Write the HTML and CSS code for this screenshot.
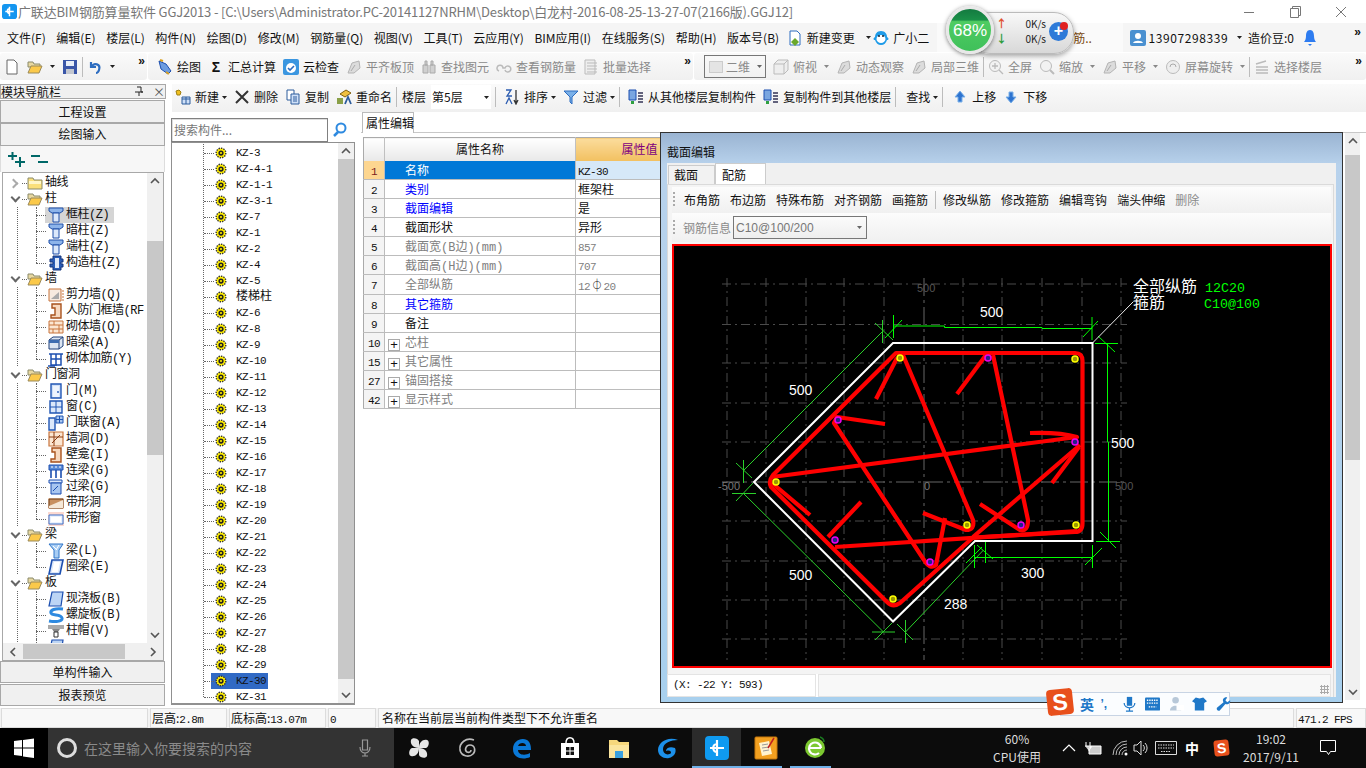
FILE: index.html
```html
<!DOCTYPE html>
<html lang="zh-CN">
<head>
<meta charset="utf-8">
<title>广联达BIM钢筋算量软件 GGJ2013</title>
<link rel="stylesheet" href="styles.css">
</head>
<body>
<svg class="defs" aria-hidden="true">
  <symbol id="reb" viewBox="0 0 16 16"><circle cx="8" cy="8" r="5.5" fill="#fe0" stroke="#333" stroke-width="1.6" stroke-dasharray="1.6 1.2"/><circle cx="8" cy="8" r="3" fill="#222"/><circle cx="8" cy="8" r="1.2" fill="#fe0"/></symbol>
  <symbol id="fold" viewBox="0 0 16 16"><path d="M1 3h5l1 2h8v9H1z" fill="#fbe07a" stroke="#8a8a6a"/><path d="M2 6h12v3H2z" fill="#fff6c8"/></symbol>
  <symbol id="open" viewBox="0 0 16 16"><path d="M1 3h5l1 2h6v3H1z" fill="#e8d8a0" stroke="#8a8a6a"/><path d="M4 7h11l-3 7H1z" fill="#fbc94a" stroke="#9a8a5a"/></symbol>
  <symbol id="col" viewBox="0 0 16 16"><path d="M1 1h14v3l-3 2H4L1 4z" fill="#8db4ea" stroke="#1f4fa8"/><path d="M5 6h6v9H5z" fill="#dbe8fb" stroke="#1f4fa8"/></symbol>
  <symbol id="gz" viewBox="0 0 16 16"><path d="M5 1h8v3h2v3h-2v2h2v3h-2v3H5v-3H2V9h3V7H2V4h3z" fill="#2a5cb5" stroke="#14347c"/><path d="M7 3h4v10H7z" fill="#dfe9fa"/></symbol>
  <symbol id="shear" viewBox="0 0 16 16"><path d="M1 2h12v12H1z" fill="#f7eadf" stroke="#c8743c"/><path d="M3 12l8-7v7z" fill="#aaa"/><path d="M14 4h2M14 7h2M14 10h2M14 13h2" stroke="#c8743c"/></symbol>
  <symbol id="rf" viewBox="0 0 16 16"><path d="M4 1h9v14H3v-3h4V5H4z" fill="#f7d9c0" stroke="#a8521c" stroke-width="1.4"/></symbol>
  <symbol id="brick" viewBox="0 0 16 16"><path d="M1 2h14v12H1z" fill="#fbe6d2" stroke="#c8743c"/><path d="M1 6h14M1 10h14M6 2v4M11 6v4M5 10v4M11 10v4" stroke="#c8743c"/></symbol>
  <symbol id="anl" viewBox="0 0 16 16"><path d="M1 5l4-3h10v9l-4 3H1z" fill="#dbe5f2" stroke="#1f3f78"/><path d="M1 5h10v9M11 5l4-3" fill="none" stroke="#1f3f78"/><path d="M1 5h10v3H1z" fill="#3d6cb0"/></symbol>
  <symbol id="jj" viewBox="0 0 16 16"><path d="M1 3h14M3 3v11h10V3M3 8h10M8 3v12M0 15h7" fill="none" stroke="#1c4fb0" stroke-width="1.5"/></symbol>
  <symbol id="door" viewBox="0 0 16 16"><path d="M3 1h10v14H3z" fill="#cfe0f8" stroke="#2056b4" stroke-width="1.4"/><path d="M5 3h6v11H5z" fill="#eef4fd"/><circle cx="10" cy="9" r=".9" fill="#2056b4"/></symbol>
  <symbol id="win" viewBox="0 0 16 16"><path d="M2 2h12v12H2z" fill="#dbe8fb" stroke="#2056b4" stroke-width="1.4"/><path d="M2 8h12M8 2v12" stroke="#2056b4"/></symbol>
  <symbol id="dw" viewBox="0 0 16 16"><path d="M1 3h6v12H1z" fill="#dbe8fb" stroke="#2056b4" stroke-width="1.4"/><path d="M8 1h7v7H8z" fill="#a8c6f0" stroke="#2056b4"/><path d="M11.500 1v7M8 4.500h7" stroke="#2056b4"/></symbol>
  <symbol id="hole" viewBox="0 0 16 16"><path d="M1 1h14v14H1z" fill="#fbe6d2" stroke="#c8743c" stroke-width="1.2"/><path d="M4 12L12 4M1 6h14M6 1v14" stroke="#8a3a10"/></symbol>
  <symbol id="lian" viewBox="0 0 16 16"><path d="M1 2h14v5H1z" fill="#5b8cd8" stroke="#1c4fb0"/><path d="M3 7v8M13 7v8M8 7v8" stroke="#1c4fb0" stroke-width="1.6"/><path d="M3 4h2M7 4h2M11 4h2" stroke="#fff"/></symbol>
  <symbol id="guo" viewBox="0 0 16 16"><path d="M1 1h13v3H1z" fill="#dbe8fb" stroke="#1c4fb0"/><path d="M3 4h10v11H3z" fill="#a8c6f0" stroke="#1c4fb0"/><path d="M5 12l5-5" stroke="#1c4fb0"/></symbol>
  <symbol id="sh" viewBox="0 0 16 16"><path d="M0 3h16v11H0z" fill="#f8d8c0"/><path d="M1 4h14v9H1z" fill="#c89060" stroke="#6a3a14"/><path d="M1 11l14-6v8H1z" fill="#f5e8d8"/></symbol>
  <symbol id="sw" viewBox="0 0 16 16"><path d="M0 1h16v14H0z" fill="#fbd8d0"/><path d="M1 4h14v9H1z" fill="#eaf1fd" stroke="#3c70c8"/><path d="M3 6h10v5H3z" fill="#fff"/></symbol>
  <symbol id="beam" viewBox="0 0 16 16"><path d="M1 1h14L11 7v8H6V7z" fill="#a8cdf4" stroke="#2e74c8"/><path d="M5 3l4 4M11 2L8 7" stroke="#fff"/></symbol>
  <symbol id="ring" viewBox="0 0 16 16"><path d="M4 1h11l-3 14H1z" fill="#dbe8fb" stroke="#1c4fb0" stroke-width="1.6"/><path d="M6 3h6l-2 10H4z" fill="#fff"/></symbol>
  <symbol id="slab" viewBox="0 0 16 16"><path d="M4 1h11l-2 14H1z" fill="#bcd5f5" stroke="#1c4fb0" stroke-width="1.2"/></symbol>
  <symbol id="spi" viewBox="0 0 16 16"><path d="M15 2C7 1 2 3 3 6s10 1 11 5-8 4-13 3" fill="none" stroke="#2e8ae0" stroke-width="3"/></symbol>
  <symbol id="cap" viewBox="0 0 16 16"><path d="M0 2h16v4H0z" fill="#aaa"/><path d="M4 6h8l-2 3H6z" fill="#888"/><path d="M6 9h4v5H6z" fill="#fff" stroke="#333"/></symbol>
  <symbol id="care" viewBox="0 0 5 3"><path d="M0 0h5L2.500 3z"/></symbol>
  <symbol id="grey" viewBox="0 0 16 16"><path d="M2 14L6 4l7-2 1 7-6 5z" fill="#dcdcdc" stroke="#b4b4b4"/><path d="M5 12l4-6" stroke="#aaa"/></symbol>
  <symbol id="copy" viewBox="0 0 16 16"><path d="M2 1h7v10H2z" fill="#fff" stroke="#2c5c9c"/><path d="M6 5h8v10H6z" fill="#cfe0f8" stroke="#2c5c9c"/><path d="M8 8h4M8 10h4M8 12h4" stroke="#2c5c9c"/></symbol>
  <symbol id="cf" viewBox="0 0 16 16"><path d="M1 1h7v10H1z" fill="#7aa6e0" stroke="#1c4fb0"/><path d="M3 12h3v3H3z" fill="#2ea040"/><path d="M10 4h5M10 7h5M10 10h5M10 13h5" stroke="#335" stroke-width="1.4"/></symbol>
</svg>

<div class="app">
  <header class="titlebar">
    <svg class="appicon" viewBox="0 0 16 16"><rect width="16" height="16" rx="3" fill="#1496f0"/><path d="M8 3v10M3.500 8h9M8 5c-3 0-3 5 0 5" fill="none" stroke="#fff" stroke-width="1.6"/></svg>
    <span class="title">广联达BIM钢筋算量软件 GGJ2013 - [C:\Users\Administrator.PC-20141127NRHM\Desktop\白龙村-2016-08-25-13-27-07(2166版).GGJ12]</span>
    <div class="winctl">
      <svg viewBox="0 0 46 23"><path d="M18 12.500h10" stroke="#777"/></svg>
      <svg viewBox="0 0 46 23"><path d="M18.500 8.500h8v9h-8zM20.500 8.500v-2h8v9h-2" fill="none" stroke="#777"/></svg>
      <svg viewBox="0 0 46 23"><path d="M18 7l10 10M28 7L18 17" stroke="#777"/></svg>
    </div>
  </header>

  <nav class="menubar">
    <span>文件(F)</span><span>编辑(E)</span><span>楼层(L)</span><span>构件(N)</span><span>绘图(D)</span><span>修改(M)</span><span>钢筋量(Q)</span><span>视图(V)</span><span>工具(T)</span><span>云应用(Y)</span><span>BIM应用(I)</span><span>在线服务(S)</span><span>帮助(H)</span><span>版本号(B)</span>
    <span class="menuicon bian"><svg class="ic" viewBox="0 0 16 16"><path d="M3 1h7l3 3v11H3z" fill="#fff" stroke="#2c6cc0"/><path d="M8 8l4 4-4 4-4-4z" fill="#6aa82c"/></svg>新建变更<svg class="caret" viewBox="0 0 5 3"><use href="#care"/></svg></span>
    <span class="menuicon xiao"><svg class="ic" viewBox="0 0 16 16"><path d="M8 1c4 0 6 3 6 6 2 1 2 3 0 3-1 3-3 5-6 5s-5-2-6-5c-2 0-2-2 0-3 0-3 2-6 6-6z" fill="#1e9be8"/><ellipse cx="8" cy="9" rx="4.500" ry="4" fill="#fff"/><circle cx="6" cy="6" r="1" fill="#123"/><circle cx="10" cy="6" r="1" fill="#123"/></svg>广小二</span>
    <span class="hidden-tail">筋..</span>
    <span class="menuicon user"><svg class="ic" viewBox="0 0 16 16"><rect width="16" height="16" rx="2" fill="#4a90d0"/><circle cx="8" cy="6" r="3" fill="#fff"/><path d="M3 13c1-3 9-3 10 0z" fill="#fff"/></svg><span class="phone">13907298339</span><svg class="caret" viewBox="0 0 5 3"><use href="#care"/></svg></span>
    <span class="dou">造价豆:0</span>
    <svg class="bell" viewBox="0 0 14 18"><path d="M7 1c3 0 4 3 4 6s1 5 2 6H1c1-1 2-3 2-6s1-6 4-6z" fill="#2e7cf0"/><path d="M5 15h4l-2 2z" fill="#2e7cf0"/></svg>
    <span class="more">»</span>
  </nav>

  <div class="toolbar">
    <div class="tgroup g1">
      <svg class="ic" viewBox="0 0 16 16"><path d="M3 1h7l3 3v11H3z" fill="#fff" stroke="#666"/></svg>
      <svg class="ic" viewBox="0 0 16 16"><use href="#open"/></svg>
      <svg class="caret" viewBox="0 0 5 3"><use href="#care"/></svg>
      <svg class="ic" viewBox="0 0 16 16"><path d="M1 1h14v14H1z" fill="#3a56a8"/><path d="M4 2h8v5H4z" fill="#e8eef8"/><path d="M4 10h8v5H4z" fill="#c4c8d0"/></svg>
      <i class="sep"></i>
      <svg class="ic" viewBox="0 0 16 16"><path d="M4 3v5h5M4.500 8C7 3 14 5 12 11c-.5 1.500-2 3-3 3" fill="none" stroke="#2c6cc0" stroke-width="2.200"/></svg>
      <svg class="caret" viewBox="0 0 5 3"><use href="#care"/></svg>
      <span class="more">»</span>
    </div>
    <div class="tgroup g2">
      <span class="tool"><svg class="ic" viewBox="0 0 16 16"><path d="M2 2l7 3 5 7-3 3-7-5z" fill="#6c9ce0" stroke="#1c4fb0"/><path d="M3 1l3 1M9 13l3 2" stroke="#d8a020" stroke-width="2"/></svg>绘图</span>
      <span class="tool"><span class="sigma">Σ</span>汇总计算</span>
      <span class="tool"><svg class="ic" viewBox="0 0 16 16"><rect width="16" height="16" rx="2" fill="#3a96e0"/><circle cx="8" cy="9" r="5" fill="#fff"/><path d="M5 9l2 2 4-4" fill="none" stroke="#2c6cc0" stroke-width="1.600"/></svg>云检查</span>
      <span class="tool off"><svg class="ic"><use href="#grey"/></svg>平齐板顶</span>
      <span class="tool off"><svg class="ic" viewBox="0 0 16 16"><path d="M2 6h5v8H2zM9 6h5v8H9zM4 2h2v4H4zM10 2h2v4h-2z" fill="#d0d0d0" stroke="#aaa"/></svg>查找图元</span>
      <span class="tool off"><svg class="ic" viewBox="0 0 16 16"><path d="M3 12a3 3 0 1 1 4-3l2 0a3 3 0 1 1 0 2" fill="none" stroke="#bbb" stroke-width="1.500"/></svg>查看钢筋量</span>
      <span class="tool off"><svg class="ic" viewBox="0 0 16 16"><path d="M2 1h10v14H2z" fill="#eee" stroke="#bbb"/><path d="M4 4h10M4 7h10M4 10h10M4 13h10" stroke="#bbb"/></svg>批量选择</span>
      <span class="more">»</span>
    </div>
    <div class="tgroup g3">
      <span class="combo2d"><i class="sq"></i>二维<svg class="caret" viewBox="0 0 5 3"><use href="#care"/></svg></span>
      <span class="tool off"><svg class="ic" viewBox="0 0 16 16"><path d="M1 5l4-4h10v10l-4 4H1zM1 5h10v10M11 5l4-4" fill="#eee" stroke="#bbb"/></svg>俯视</span>
      <svg class="caret off" viewBox="0 0 5 3"><use href="#care"/></svg>
      <span class="tool off"><svg class="ic"><use href="#grey"/></svg>动态观察</span>
      <span class="tool off"><svg class="ic"><use href="#grey"/></svg>局部三维</span>
      <i class="sep"></i>
      <span class="tool off"><svg class="ic" viewBox="0 0 16 16"><circle cx="7" cy="7" r="5.500" fill="#f2f2f2" stroke="#bbb"/><path d="M11 11l4 4M7 4v6M4 7h6" stroke="#bbb" stroke-width="1.300"/></svg>全屏</span>
      <span class="tool off"><svg class="ic" viewBox="0 0 16 16"><circle cx="7" cy="7" r="5.500" fill="#f2f2f2" stroke="#bbb"/><path d="M11 11l4 4" stroke="#bbb" stroke-width="2"/></svg>缩放</span>
      <svg class="caret off" viewBox="0 0 5 3"><use href="#care"/></svg>
      <span class="tool off"><svg class="ic"><use href="#grey"/></svg>平移</span>
      <svg class="caret off" viewBox="0 0 5 3"><use href="#care"/></svg>
      <span class="tool off"><svg class="ic" viewBox="0 0 16 16"><circle cx="8" cy="8" r="6.500" fill="#eee" stroke="#bbb"/><path d="M5 8a3 3 0 0 1 6 0" fill="none" stroke="#aaa"/></svg>屏幕旋转</span>
      <svg class="caret off" viewBox="0 0 5 3"><use href="#care"/></svg>
      <i class="sep"></i>
      <span class="tool off"><svg class="ic" viewBox="0 0 16 16"><path d="M2 5l10-3M2 8h12M2 11h12M2 14h12" stroke="#bbb" stroke-width="1.500"/></svg>选择楼层</span>
      <span class="more">»</span>
    </div>
  </div>

  <main class="workspace">
    <aside class="nav">
      <div class="navtitle"><span>模块导航栏</span><svg class="pin" viewBox="0 0 10 10"><path d="M3 1h4v5h2M1 6h8M5 6v4" fill="none" stroke="#222"/></svg><span class="navx">×</span></div>
      <div class="navbtn">工程设置</div>
      <div class="navbtn second">绘图输入</div>
      <div class="expand">
        <svg viewBox="0 0 17 16"><path d="M0 5h9M4.500 1v8M7 11h10M12 6v10" stroke="#006868" stroke-width="2"/></svg>
        <svg viewBox="0 0 17 16"><path d="M0 5h9M7 11h10" stroke="#006868" stroke-width="2"/></svg>
      </div>
      <div class="treebox">
        <div class="tree">
          <div class="r p"><b class="chev closed"></b><svg class="ico"><use href="#fold"/></svg>轴线</div>
          <div class="r p"><b class="chev"></b><svg class="ico"><use href="#open"/></svg>柱</div>
          <div class="r c cs"><svg class="ico"><use href="#col"/></svg><span class="lb">框柱(Z)</span></div>
          <div class="r c"><svg class="ico"><use href="#col"/></svg><span class="lb">暗柱(Z)</span></div>
          <div class="r c"><svg class="ico"><use href="#col"/></svg><span class="lb">端柱(Z)</span></div>
          <div class="r c last"><svg class="ico"><use href="#gz"/></svg><span class="lb">构造柱(Z)</span></div>
          <div class="r p"><b class="chev"></b><svg class="ico"><use href="#open"/></svg>墙</div>
          <div class="r c"><svg class="ico"><use href="#shear"/></svg><span class="lb">剪力墙(Q)</span></div>
          <div class="r c"><svg class="ico"><use href="#rf"/></svg><span class="lb">人防门框墙(RF</span></div>
          <div class="r c"><svg class="ico"><use href="#brick"/></svg><span class="lb">砌体墙(Q)</span></div>
          <div class="r c"><svg class="ico"><use href="#anl"/></svg><span class="lb">暗梁(A)</span></div>
          <div class="r c last"><svg class="ico"><use href="#jj"/></svg><span class="lb">砌体加筋(Y)</span></div>
          <div class="r p"><b class="chev"></b><svg class="ico"><use href="#open"/></svg>门窗洞</div>
          <div class="r c"><svg class="ico"><use href="#door"/></svg><span class="lb">门(M)</span></div>
          <div class="r c"><svg class="ico"><use href="#win"/></svg><span class="lb">窗(C)</span></div>
          <div class="r c"><svg class="ico"><use href="#dw"/></svg><span class="lb">门联窗(A)</span></div>
          <div class="r c"><svg class="ico"><use href="#hole"/></svg><span class="lb">墙洞(D)</span></div>
          <div class="r c"><svg class="ico"><use href="#rf"/></svg><span class="lb">壁龛(I)</span></div>
          <div class="r c"><svg class="ico"><use href="#lian"/></svg><span class="lb">连梁(G)</span></div>
          <div class="r c"><svg class="ico"><use href="#guo"/></svg><span class="lb">过梁(G)</span></div>
          <div class="r c"><svg class="ico"><use href="#sh"/></svg><span class="lb">带形洞</span></div>
          <div class="r c last"><svg class="ico"><use href="#sw"/></svg><span class="lb">带形窗</span></div>
          <div class="r p"><b class="chev"></b><svg class="ico"><use href="#open"/></svg>梁</div>
          <div class="r c"><svg class="ico"><use href="#beam"/></svg><span class="lb">梁(L)</span></div>
          <div class="r c last"><svg class="ico"><use href="#ring"/></svg><span class="lb">圈梁(E)</span></div>
          <div class="r p"><b class="chev"></b><svg class="ico"><use href="#open"/></svg>板</div>
          <div class="r c"><svg class="ico"><use href="#slab"/></svg><span class="lb">现浇板(B)</span></div>
          <div class="r c"><svg class="ico"><use href="#spi"/></svg><span class="lb">螺旋板(B)</span></div>
          <div class="r c"><svg class="ico"><use href="#cap"/></svg><span class="lb">柱帽(V)</span></div>
          <div class="r c"><svg class="ico"><use href="#slab"/></svg></div>
        </div>
        <div class="vs vs-nav"><svg viewBox="0 0 16 16"><path d="M4 10l4-4 4 4" fill="none" stroke="#555" stroke-width="1.600"/></svg><i class="trk"><i class="thumb"></i></i><svg viewBox="0 0 16 16"><path d="M4 6l4 4 4-4" fill="none" stroke="#555" stroke-width="1.600"/></svg></div>
        <div class="hs"><svg viewBox="0 0 16 16"><path d="M10 4L6 8l4 4" fill="none" stroke="#555" stroke-width="1.600"/></svg><i class="hthumb"></i><svg viewBox="0 0 16 16"><path d="M6 4l4 4-4 4" fill="none" stroke="#555" stroke-width="1.600"/></svg></div>
      </div>
      <div class="navbtn low">单构件输入</div>
      <div class="navbtn low b2">报表预览</div>
    </aside>

    <section class="content">
      <div class="toolbar2">
        <span class="tool"><svg class="ic" viewBox="0 0 16 16"><path d="M1 2l3-1 2 2-1 3H2z" fill="#f0c020" stroke="#a08010"/><path d="M7 8h8v7H7z" fill="#cfe0f8" stroke="#2c5c9c"/><path d="M7 10h8M11 8v7" stroke="#2c5c9c"/></svg>新建</span><svg class="caret tight" viewBox="0 0 5 3"><use href="#care"/></svg>
        <span class="tool"><svg class="ic" viewBox="0 0 16 16"><path d="M2 2l12 12M14 2L2 14" stroke="#333" stroke-width="2"/></svg>删除</span>
        <span class="tool"><svg class="ic"><use href="#copy"/></svg>复制</span>
        <span class="tool"><svg class="ic" viewBox="0 0 16 16"><path d="M4 5l6-4 5 3-6 4z" fill="#f0c040" stroke="#806010"/><path d="M1 15V9h6v6z" fill="#8aa048"/><path d="M9 15l3-7 3 7" fill="none" stroke="#2c5c9c" stroke-width="1.800"/></svg>重命名</span>
        <i class="sep"></i>
        <span class="floor">楼层</span>
        <span class="floorbox">第5层<svg class="caret" viewBox="0 0 5 3"><use href="#care"/></svg></span>
        <i class="sep wide"></i>
        <span class="tool"><svg class="ic" viewBox="0 0 16 16"><path d="M2 1h5L3 7h5M2 15l3-6 3 6" fill="none" stroke="#2c5cb0" stroke-width="1.300"/><path d="M12 1v13M10 11l2 4 2-4" fill="none" stroke="#333" stroke-width="1.300"/></svg>排序</span><svg class="caret tight" viewBox="0 0 5 3"><use href="#care"/></svg>
        <span class="tool"><svg class="ic" viewBox="0 0 16 16"><path d="M1 2h14L9 8v7l-2-2V8z" fill="#7ab0e8" stroke="#2c6cc0"/></svg>过滤</span><svg class="caret tight" viewBox="0 0 5 3"><use href="#care"/></svg>
        <i class="sep wide"></i>
        <span class="tool"><svg class="ic"><use href="#cf"/></svg>从其他楼层复制构件</span>
        <span class="tool"><svg class="ic"><use href="#cf"/></svg>复制构件到其他楼层</span>
        <i class="sep"></i>
        <span class="tool find">查找</span><svg class="caret tight" viewBox="0 0 5 3"><use href="#care"/></svg>
        <i class="sep wider"></i>
        <span class="tool"><svg class="ic" viewBox="0 0 16 16"><path d="M8 2l5 6H10v5H6V8H3z" fill="#2e74d0" stroke="#7ab0e8"/></svg>上移</span>
        <span class="tool"><svg class="ic" viewBox="0 0 16 16"><path d="M8 14l5-6H10V3H6v5H3z" fill="#2e74d0" stroke="#7ab0e8"/></svg>下移</span>
      </div>
      <div class="panes">
        <div class="listcol">
          <div class="searchrow">
            <div class="search">搜索构件...</div>
            <svg class="mag" viewBox="0 0 16 16"><circle cx="9" cy="6" r="4.500" fill="none" stroke="#2e8ae0" stroke-width="2"/><path d="M6 10l-4 4" stroke="#2e8ae0" stroke-width="2.500"/></svg>
          </div>
          <div class="listbox">
            <div class="list">
              <div class="k"><svg class="ico"><use href="#reb"/></svg><span>KZ-3</span></div>
              <div class="k"><svg class="ico"><use href="#reb"/></svg><span>KZ-4-1</span></div>
              <div class="k"><svg class="ico"><use href="#reb"/></svg><span>KZ-1-1</span></div>
              <div class="k"><svg class="ico"><use href="#reb"/></svg><span>KZ-3-1</span></div>
              <div class="k"><svg class="ico"><use href="#reb"/></svg><span>KZ-7</span></div>
              <div class="k"><svg class="ico"><use href="#reb"/></svg><span>KZ-1</span></div>
              <div class="k"><svg class="ico"><use href="#reb"/></svg><span>KZ-2</span></div>
              <div class="k"><svg class="ico"><use href="#reb"/></svg><span>KZ-4</span></div>
              <div class="k"><svg class="ico"><use href="#reb"/></svg><span>KZ-5</span></div>
              <div class="k"><svg class="ico"><use href="#reb"/></svg><span>楼梯柱</span></div>
              <div class="k"><svg class="ico"><use href="#reb"/></svg><span>KZ-6</span></div>
              <div class="k"><svg class="ico"><use href="#reb"/></svg><span>KZ-8</span></div>
              <div class="k"><svg class="ico"><use href="#reb"/></svg><span>KZ-9</span></div>
              <div class="k"><svg class="ico"><use href="#reb"/></svg><span>KZ-10</span></div>
              <div class="k"><svg class="ico"><use href="#reb"/></svg><span>KZ-11</span></div>
              <div class="k"><svg class="ico"><use href="#reb"/></svg><span>KZ-12</span></div>
              <div class="k"><svg class="ico"><use href="#reb"/></svg><span>KZ-13</span></div>
              <div class="k"><svg class="ico"><use href="#reb"/></svg><span>KZ-14</span></div>
              <div class="k"><svg class="ico"><use href="#reb"/></svg><span>KZ-15</span></div>
              <div class="k"><svg class="ico"><use href="#reb"/></svg><span>KZ-16</span></div>
              <div class="k"><svg class="ico"><use href="#reb"/></svg><span>KZ-17</span></div>
              <div class="k"><svg class="ico"><use href="#reb"/></svg><span>KZ-18</span></div>
              <div class="k"><svg class="ico"><use href="#reb"/></svg><span>KZ-19</span></div>
              <div class="k"><svg class="ico"><use href="#reb"/></svg><span>KZ-20</span></div>
              <div class="k"><svg class="ico"><use href="#reb"/></svg><span>KZ-21</span></div>
              <div class="k"><svg class="ico"><use href="#reb"/></svg><span>KZ-22</span></div>
              <div class="k"><svg class="ico"><use href="#reb"/></svg><span>KZ-23</span></div>
              <div class="k"><svg class="ico"><use href="#reb"/></svg><span>KZ-24</span></div>
              <div class="k"><svg class="ico"><use href="#reb"/></svg><span>KZ-25</span></div>
              <div class="k"><svg class="ico"><use href="#reb"/></svg><span>KZ-26</span></div>
              <div class="k"><svg class="ico"><use href="#reb"/></svg><span>KZ-27</span></div>
              <div class="k"><svg class="ico"><use href="#reb"/></svg><span>KZ-28</span></div>
              <div class="k"><svg class="ico"><use href="#reb"/></svg><span>KZ-29</span></div>
              <div class="k on"><svg class="ico"><use href="#reb"/></svg><span>KZ-30</span></div>
              <div class="k"><svg class="ico"><use href="#reb"/></svg><span>KZ-31</span></div>
            </div>
            <div class="vs vs-list"><svg viewBox="0 0 16 16"><path d="M4 10l4-4 4 4" fill="none" stroke="#555" stroke-width="1.600"/></svg><i class="trk"><i class="thumb"></i></i><svg viewBox="0 0 16 16"><path d="M4 6l4 4 4-4" fill="none" stroke="#555" stroke-width="1.600"/></svg></div>
          </div>
        </div>
        <div class="propcol">
          <div class="tabs"><span class="tab">属性编辑</span></div>
          <div class="propbody">
            <table class="props">
              <colgroup><col class="c1"><col class="c2"><col class="c3"></colgroup>
              <thead><tr><th></th><th>属性名称</th><th class="val">属性值</th></tr></thead>
              <tbody>
                <tr class="cur"><td>1</td><td>名称</td><td><i class="m">KZ-30</i></td></tr>
                <tr><td>2</td><td class="blue">类别</td><td>框架柱</td></tr>
                <tr><td>3</td><td class="blue">截面编辑</td><td>是</td></tr>
                <tr><td>4</td><td>截面形状</td><td>异形</td></tr>
                <tr class="dim"><td>5</td><td>截面宽(B边)(mm)</td><td><i class="m">857</i></td></tr>
                <tr class="dim"><td>6</td><td>截面高(H边)(mm)</td><td><i class="m">707</i></td></tr>
                <tr class="dim"><td>7</td><td>全部纵筋</td><td><i class="m">12<b class="rb">⏀</b>20</i></td></tr>
                <tr><td>8</td><td class="blue">其它箍筋</td><td></td></tr>
                <tr><td>9</td><td>备注</td><td></td></tr>
                <tr class="dim grp"><td>10</td><td><b class="plus">+</b>芯柱</td><td></td></tr>
                <tr class="dim grp"><td>15</td><td><b class="plus">+</b>其它属性</td><td></td></tr>
                <tr class="dim grp"><td>27</td><td><b class="plus">+</b>锚固搭接</td><td></td></tr>
                <tr class="dim grp"><td>42</td><td><b class="plus">+</b>显示样式</td><td></td></tr>
              </tbody>
            </table>
            <div class="vs vs-prop"><svg viewBox="0 0 16 16"><path d="M4 10l4-4 4 4" fill="none" stroke="#555" stroke-width="1.600"/></svg><i class="trk"><i class="thumb"></i></i><svg viewBox="0 0 16 16"><path d="M4 6l4 4 4-4" fill="none" stroke="#555" stroke-width="1.600"/></svg></div>
          </div>
        </div>
      </div>
    </section>
  </main>

  <footer class="status">
    <span class="s0"></span><span class="s1">层高:<i class="m">2.8m</i></span><span class="s2">底标高:<i class="m">13.07m</i></span><span class="s3"><i class="m">0</i></span><span class="s4">名称在当前层当前构件类型下不允许重名</span><span class="s5"><i class="m">471.2 FPS</i></span>
  </footer>

  <div class="taskbar">
    <div class="start"><svg viewBox="0 0 20 20"><path d="M0 3l8-1v7.500H0zM9 2l11-1.500v9H9zM0 10.500h8V18l-8-1zM9 10.500h11V20L9 18.500z" fill="#fff"/></svg></div>
    <div class="tsearch"><i class="cortana"></i><span>在这里输入你要搜索的内容</span><svg class="mic" viewBox="0 0 12 18"><path d="M3.500 1h5v10h-5zM1 8c0 8 10 8 10 0M6 14v3M3 17h6" fill="none" stroke="#999" stroke-width="1.200"/></svg></div>
    <div class="apps">
      <span class="app-i"><svg viewBox="0 0 24 24"><path d="M12 12C6 12 3 8 4 4c1-3 7-2 8 1zM12 12c0-6 4-9 8-8 3 1 2 7-1 8zM12 12c6 0 9 4 8 8-1 3-7 2-8-1zM12 12c0 6-4 9-8 8-3-1-2-7 1-8z" fill="#e6e6e6"/></svg></span>
      <span class="app-i"><svg viewBox="0 0 24 24"><path d="M18 4C10 1 3 7 4 14c1 6 9 8 13 4 3-3 2-9-3-9-4 0-6 5-3 7 2 1 4 0 4-2" fill="none" stroke="#bbb" stroke-width="1.600"/></svg></span>
      <span class="app-i e3"><svg viewBox="0 0 24 24"><path d="M4 13C4 5 12 1 18 4c3 2 4 5 4 10H9c0 5 7 6 12 3v4c-6 3-17 2-17-8zM9 10h8c0-4-7-4-8 0z" fill="#0a78d7"/></svg></span>
      <span class="app-i"><svg viewBox="0 0 24 24"><path d="M3 7h18v15H3z" fill="#fff"/><path d="M8 7c0-7 8-7 8 0" fill="none" stroke="#fff" stroke-width="1.500"/><path d="M8 11h3.500v3.500H8zM12.500 11H16v3.500h-3.500zM8 15.500h3.500V19H8zM12.500 15.500H16V19h-3.500z" fill="#111"/></svg></span>
      <span class="app-i"><svg viewBox="0 0 24 24"><path d="M2 4h8l2 2h10v16H2z" fill="#f6d77c"/><path d="M2 9h20v13H2z" fill="#fbe59e"/><path d="M8 15h8v7H8z" fill="#3aa0e0"/></svg></span>
      <span class="app-i"><svg viewBox="0 0 24 24"><path d="M22 4C12 0 2 6 2 14c0 6 6 9 11 8 5-1 8-6 6-10-5-2-9 0-9 3 4-1 5 0 5 2-3 3-8 1-8-4 0-6 8-9 15-9z" fill="#1c90ea"/></svg></span>
      <span class="app-i act"><svg viewBox="0 0 24 24"><rect width="24" height="24" rx="4" fill="#0f9af0"/><path d="M12 4v16M5 12h14M12 8c-5 0-5 8 0 8" fill="none" stroke="#fff" stroke-width="2.200"/></svg></span>
      <span class="app-i run"><svg viewBox="0 0 24 24"><rect x="1" y="1" width="22" height="22" rx="1" fill="#f2a020" stroke="#c8780a"/><path d="M5 7l10-2 3 13-10 2z" fill="#fff3d0"/><path d="M8 9l6-1M8 12l7-1M9 15l6-1" stroke="#999"/><path d="M20 2l-6 10" stroke="#c02020" stroke-width="1.500"/></svg></span>
      <span class="app-i run"><svg viewBox="0 0 24 24"><circle cx="12" cy="12" r="10" fill="#7cc830"/><path d="M6 12h12M18 12a6 6 0 1 0-2 5" fill="none" stroke="#fff" stroke-width="2.200"/><path d="M17 1c3 1 4 3 4 5" stroke="#1a7a20" stroke-width="1.500" fill="none"/></svg></span>
    </div>
    <div class="tray">
      <div class="cpu"><span>60%</span><span>CPU使用</span></div>
      <svg class="t1" viewBox="0 0 14 8"><path d="M1 7l6-6 6 6" fill="none" stroke="#fff" stroke-width="1.200"/></svg>
      <svg class="t2" viewBox="0 0 18 16"><path d="M1 2v4M5 2v4M0 6h6v2H4v3M6 6h10v8H4v-3z" fill="#ccc" stroke="#fff"/></svg>
      <svg class="t3" viewBox="0 0 16 16"><path d="M1 15a14 14 0 0 1 14-14M4 15a11 11 0 0 1 11-11M7 15a8 8 0 0 1 8-8M10 15a5 5 0 0 1 5-5" fill="none" stroke="#bbb"/><circle cx="14" cy="14" r="1.500" fill="#fff"/></svg>
      <svg class="t4" viewBox="0 0 16 16"><path d="M1 5h3l4-4v14l-4-4H1zM10 5a4 4 0 0 1 0 6M12 3a7 7 0 0 1 0 10" fill="none" stroke="#ddd"/></svg>
      <svg class="t5" viewBox="0 0 22 14"><path d="M.5.500h21v13H.5z" fill="none" stroke="#ddd"/><path d="M3 4h16M3 7h16M6 10.500h10" stroke="#ddd" stroke-dasharray="1.500 1"/></svg>
      <span class="zh">中</span>
      <span class="sgt sg-small">S</span>
      <div class="clock"><span>19:02</span><span>2017/9/11</span></div>
      <svg class="t6" viewBox="0 0 16 16"><path d="M.5.500h15v11h-5l-2 3-2-3h-6z" fill="none" stroke="#fff"/></svg>
    </div>
  </div>

  <div class="netw">
    <div class="gauge">68%</div>
    <div class="nrows">
      <span class="up">↑</span><span class="rate">0K/s</span>
      <span class="down">↓</span><span class="rate">0K/s</span>
    </div>
    <span class="plusb">+</span><i class="dot"></i>
  </div>

  <div class="dialog">
    <div class="dtitle">截面编辑</div>
    <div class="dbody">
      <div class="dtabs"><span class="dt">截面</span><span class="dt act">配筋</span></div>
      <div class="dpanel">
        <div class="drow">
          <i class="grip"></i><span>布角筋</span><span>布边筋</span><span>特殊布筋</span><span>对齐钢筋</span><span>画箍筋</span><i class="vsep"></i><span>修改纵筋</span><span>修改箍筋</span><span>编辑弯钩</span><span>端头伸缩</span><span class="gr">删除</span>
        </div>
        <div class="drow r2">
          <i class="grip"></i><span class="gr">钢筋信息</span>
          <span class="rcombo">C10@100/200<svg class="caret" viewBox="0 0 5 3"><use href="#care"/></svg></span>
        </div>
        <div class="cv">
          <svg viewBox="674 246 656 420" class="cad">
            <path class="g" d="M722 284H1127M722 324.500H1127M722 363H1127M722 403H1127M722 442H1127M722 521H1127M722 561H1127M722 600H1127M722 639H1127M727 278V660M766 278V660M806 278V660M844 278V660M884 278V660M963 278V660M1002 278V660M1042 278V660M1082 278V660M1121 278V660"/>
            <path class="g ax" d="M722 482H1127M924 278V660"/>
            <text class="lbl dimt" x="917" y="292">500</text>
            <text class="lbl dimt2" x="718" y="490">-500</text>
            <text class="lbl dimt2" x="924" y="490">0</text>
            <text class="lbl dimt" x="1115" y="490">500</text>

            <path class="gn" d="M893.500 326H944.500V327.500H1042V328.500H1092M893.500 315V338M885 338L902 320M1092 317V340M1083 337L1098 321M1107.500 343V442M1108.500 442V541.500M1095 343.500H1118M1098 336L1115 352M1096 541.500H1120M1100 532L1116 548M974.500 557.500H1092.500M1092.500 545V568M1085 565L1102 548M974.500 545V568M985.500 542V563M966 563L982 547M977 545L993 559"/>
            <path class="gn thin" d="M905.500 632L983.500 550M905.500 620V643M897 624L913 640M743.500 493.500L883.500 632M872 632H895M875 640L892 623M732 493.500H756M736 501L753 483M743.500 470.500L882.500 331.500M743.500 460V483M736 463L752 478M882.500 320V343M875 323L893 340"/>
            <path class="wl" d="M893 343H1092.500V541H975L893 621.500L754 482Z"/>
            <path class="ldr" d="M1092.500 343L1133.500 301.500"/>

            <path class="rd" d="M896 353H1075Q1082.500 353 1082.500 361V523Q1082.500 532 1075 532L973 537.500L900 603Q893 608 887 602L771 487Q768 481 773 475Z"/>
            <path class="rd" d="M772 477L1077 437Q1060 432 1030 433"/>
            <path class="rd" d="M1080 445L973 537"/>
            <path class="rd" d="M1079 447L1052 483"/>
            <path class="rd" d="M885 424L837 417L834 423L924 560Q930 570 936 565L945 518"/>
            <path class="rd" d="M903 355L973 520Q975 530 966 530L923 513"/>
            <path class="rd" d="M897 358L876 399"/>
            <path class="rd" d="M957 394L986 355"/>
            <path class="rd" d="M993 355L1028 520Q1028 532 1020 530L980 504"/>
            <path class="rd" d="M835 547L1077 531"/>
            <path class="rd" d="M828 537L861 502"/>
            <path class="rd" d="M772 483L810 515"/>

            <g class="dy"><circle cx="776" cy="482" r="3"/><circle cx="900" cy="358" r="3"/><circle cx="967" cy="525" r="3"/><circle cx="893" cy="599" r="3"/><circle cx="1075" cy="359" r="3"/><circle cx="1076" cy="525" r="3"/></g>
            <g class="dm"><circle cx="838" cy="420" r="3"/><circle cx="835" cy="540" r="3"/><circle cx="930" cy="562" r="3"/><circle cx="988" cy="358" r="3"/><circle cx="1075" cy="442" r="3"/><circle cx="1021" cy="525" r="3"/></g>

            <text class="lbl w" x="980" y="317">500</text>
            <text class="lbl w" x="789" y="395">500</text>
            <text class="lbl w" x="789" y="580">500</text>
            <text class="lbl w" x="944" y="609">288</text>
            <text class="lbl w" x="1021" y="578">300</text>
            <text class="lbl w" x="1111" y="448">500</text>
            <text class="cj" x="1133" y="292">全部纵筋</text>
            <text class="cj" x="1133" y="308">箍筋</text>
            <text class="gt" x="1205" y="292">12C20</text>
            <text class="gt" x="1204" y="308">C10@100</text>
          </svg>
        </div>
        <div class="dstat"><span class="xy">(X: -22 Y: 593)</span><span class="xyr"></span></div>
      </div>
    </div>
  </div>

  <div class="ime">
    <span class="sgt sg-big">S</span>
    <span class="ying">英</span><span class="ipunc">’,</span>
    <svg viewBox="0 0 14 18"><path d="M4 1h6v10H4z" fill="#1f78c8"/><path d="M1 8c0 7 12 7 12 0M7 14v3M3 17h8" fill="none" stroke="#1f78c8" stroke-width="1.400"/></svg>
    <svg viewBox="0 0 16 14"><rect width="16" height="14" rx="1" fill="#1f78c8"/><path d="M2 3h12M2 6h12M4 10h8" stroke="#fff" stroke-width="1.400" stroke-dasharray="1.500 1"/></svg>
    <svg viewBox="0 0 16 16"><circle cx="7" cy="4" r="3.500" fill="#b8c8d8"/><path d="M1 15c0-7 12-7 12 0z" fill="#b8c8d8"/><rect x="8" y="9" width="8" height="6" fill="#fff"/></svg>
    <svg viewBox="0 0 16 16"><path d="M4 1l4 1 4-1 4 4-3 2v8H3V7L0 5z" fill="#1f78c8"/></svg>
    <svg viewBox="0 0 16 16"><path d="M15 4l-3 2-2-2 2-3c-3-1-6 2-4 5L1 12c-1 2 1 4 3 3l6-7c3 1 6-1 5-4z" fill="#1f78c8"/></svg>
  </div>
</div>
</body>
</html>
```
FILE: styles.css
```css
*{box-sizing:border-box}
html,body{margin:0;padding:0;overflow:hidden}
body{width:1366px;height:768px;background:#fff;color:#111;font:12px/16px "Noto Sans CJK SC","Liberation Sans",sans-serif}
.defs{position:absolute;width:0;height:0}
.app{width:1366px;height:768px;display:flex;flex-direction:column;position:relative;overflow:hidden}
i,b{font-style:normal;font-weight:normal}
.ic{width:16px;height:16px;flex:none}
.caret{width:5px;height:3px;flex:none;fill:#222}
.caret.off{fill:#888}
.sep{width:1px;height:20px;background:#bcbcbc;flex:none;margin:0 -3px}
.sep.wide{margin-right:1px}
.sep.wider{margin-right:2px}
.more{font:bold 12px/14px "Liberation Sans",sans-serif;margin-left:auto;align-self:flex-start;margin-top:1px}

.titlebar{height:23px;display:flex;align-items:center;flex:none;background:#fff}
.appicon{width:15px;height:15px;margin:0 1px 0 2px}
.title{color:#777;font-size:13px;letter-spacing:-.17px;white-space:nowrap}
.winctl{margin-left:auto;display:flex;margin-right:2px}
.winctl svg{width:46px;height:23px}

.menubar{height:29px;flex:none;background:#f5f5f5;display:flex;align-items:center;gap:10.6px;padding-left:7px;white-space:nowrap}
.menuicon{display:flex;align-items:center;gap:2px}
.menuicon .caret{margin-left:7px}
.menuicon.bian{margin-left:-3px;gap:4px}
.menuicon.xiao{margin-left:-8px;gap:4px}
.hidden-tail{width:186px;align-self:stretch;background:#fafafa;text-align:right;padding:7px 31px 0 0;color:#7a4a10;margin-left:-3px}
.menuicon.user{margin-left:-3px}
.phone{letter-spacing:.6px}
.dou{margin-left:-5px}
.bell{width:14px;height:18px;margin-left:-2px}
.menubar .more{align-self:center;margin-top:0;margin-right:5px;transform:translateY(-6px);color:#111}

.toolbar{height:30px;flex:none;display:flex;background:#fff;white-space:nowrap}
.tgroup{display:flex;align-items:center;gap:7px;background:linear-gradient(#fafafa,#f0f0f0);margin-top:1px;margin-bottom:2px;border-radius:3px}
.g1{width:147px;padding:0 2px 0 4px}
.g2{width:545px;margin-left:1px;padding:0 2px 0 59px}
.g2 .tool:first-child{margin-left:-50px}
.g3{flex:1;padding:0 4px 0 10px;margin-left:1px}
.tool{display:flex;align-items:center;gap:4px;flex:none}
.tool.off{color:#8a8a8a}
.sigma{width:16px;height:16px;font:bold 14px/16px "Liberation Sans",sans-serif;text-align:center;color:#111}
.combo2d{width:62px;height:23px;border:1px solid #777;display:flex;align-items:center;color:#8a8a8a;gap:3px;padding-left:4px;flex:none}
.combo2d .sq{width:14px;height:12px;background:#e4e4e4;border:1px solid #ccc}
.combo2d .caret{margin-left:4px;fill:#666}

.workspace{flex:1;min-height:0;display:flex}
.nav{width:168px;flex:none;display:flex;flex-direction:column;padding-top:2px}
.navtitle{height:15px;width:166px;border:1px solid #a8a8a8;background:#f0f0f0;display:flex;align-items:center;font-size:12px;line-height:13px;position:relative}
.pin{width:10px;height:10px;position:absolute;left:133px;top:1px}
.navx{position:absolute;left:152px;top:0;color:#555;font-size:12px}
.navbtn{width:165px;height:23px;background:#f0f0f0;border:1px solid #a8a8a8;text-align:center;line-height:21px;flex:none}
.navtitle + .navbtn{margin-top:1px}
.navbtn.second{line-height:19px}
.navbtn.low{height:22px;line-height:20px}
.navbtn.b2{margin-top:1px;line-height:19px}
.expand{height:26px;display:flex;gap:6px;align-items:center;padding:0 0 0 7px;width:165px;background:#f7f7f7;border-left:1px solid #ddd;border-right:1px solid #ddd;flex:none}
.expand svg{width:17px;height:16px}
.treebox{width:162px;height:489px;flex:none;margin-left:2px;border:1px solid #a8a8a8;background:#fff;position:relative;overflow:hidden;display:flex;flex-wrap:wrap;align-content:flex-start}
.tree{width:144px;height:470px;overflow:hidden;padding-top:2px}
.r{height:16px;position:relative;display:flex;align-items:center;font-family:"Liberation Mono","Noto Sans CJK SC",monospace;white-space:nowrap;letter-spacing:-.5px}
.r .ico{flex:none}
.ico{width:16px;height:16px}
.r.p{padding-left:24px;font-size:12px}
.r.p .ico{margin-right:2px}
.chev{position:absolute;left:9px;top:3px;width:7px;height:7px;border-right:2px solid #666;border-bottom:2px solid #666;transform:rotate(45deg)}
.chev.closed{border-color:#aaa;transform:rotate(-45deg);top:5px;left:7px}
.r.p::before{content:"";position:absolute;left:19px;width:5px;top:8px;border-top:1px dotted #666}
.r.c{padding-left:45px;background:linear-gradient(#666 50%,transparent 50%) 14px 0/1px 2px repeat-y}
.r.c::before{content:"";position:absolute;left:33px;top:0;bottom:0;border-left:1px dotted #666}
.r.c.last::before{bottom:8px}
.r.c::after{content:"";position:absolute;left:33px;width:10px;top:8px;border-top:1px dotted #666}
.r.c.cs{background:linear-gradient(#d5d5d5,#d5d5d5) 42px 0/69px 16px no-repeat,linear-gradient(#666 50%,transparent 50%) 14px 0/1px 2px repeat-y}
.lb{margin-left:0;padding:0 2px;line-height:16px}
.r.c .ico{position:relative;z-index:1}

.vs{display:flex;flex-direction:column;width:16px;background:#f0f0f0}
.vs svg{width:16px;height:16px;flex:none}
.vs .trk{flex:1;display:block;position:relative}
.vs .thumb{display:block;position:absolute;left:0;right:0;background:#c8c8c8}
.vs-nav{height:470px}
.vs-nav .thumb{top:52px;height:214px}
.hs{width:160px;height:17px;background:#f0f0f0;display:flex;align-items:center}
.hs svg{width:16px;height:16px;flex:none;margin:0 2px}
.hs svg:last-child{margin-left:auto}
.hthumb{width:102px;height:15px;background:#c8c8c8}

.content{flex:1;min-width:0;display:flex;flex-direction:column}
.toolbar2{height:28px;margin-top:2px;margin-left:4px;flex:none;background:linear-gradient(#fafafa,#f0f0f0);display:flex;align-items:center;gap:7px;padding:0 0 2px 3px;white-space:nowrap}
.caret.tight{margin-left:-4px}
.floor{margin-left:1px}
.floorbox{width:60px;height:24px;background:#fff;display:flex;align-items:center;justify-content:space-between;padding:0 2px 0 1px;margin-left:-2px}
.find{margin-left:6px}

.panes{flex:1;min-height:0;display:flex;margin-left:3px}
.listcol{width:184px;flex:none}
.searchrow{height:30px;display:flex;align-items:center;padding-top:5px}
.search{width:157px;height:24px;border:1px solid #808080;color:#777;padding:3px 0 0 2px;background:#fff;box-shadow:inset 1px 1px 0 #ddd}
.mag{width:16px;height:16px;margin-left:4px}
.listbox{height:563px;width:184px;border:1px solid #909090;border-bottom:2px solid #909090;display:flex;background:#fff}
.list{flex:1;padding-top:2px;background:#fff;position:relative;overflow:hidden}
.k{height:16px;display:flex;align-items:center;position:relative;padding-left:40px;font-family:"Liberation Mono","Noto Sans CJK SC",monospace;font-size:11px;letter-spacing:-.6px;white-space:nowrap}
.k svg{flex:none;width:14px;height:14px;position:relative;z-index:1;margin-left:2px}
.k::before{content:"";position:absolute;left:31px;top:-1px;bottom:0;border-left:1px dotted #666}
.k:last-child::before{bottom:8px}
.k::after{content:"";position:absolute;left:32px;width:10px;top:8px;border-top:1px dotted #666}
.k span{margin-left:6px;padding:0 2px;line-height:16px}
.k:nth-child(10) span{font-size:12px;letter-spacing:0}
.k.on{background:linear-gradient(#316ac5,#316ac5) 39px 0/57px 16px no-repeat}
.vs-list{height:100%}
.vs-list .thumb{top:0;bottom:8px}

.propcol{flex:1;min-width:0;display:flex;flex-direction:column;margin-left:6px}
.tabs{height:21px;border-bottom:1px solid #c8c8c8;flex:none}
.tab{display:inline-block;height:21px;padding:2px 0 0 3px;width:52px;background:#fff;border:1px solid #bbb;border-bottom:0;margin-left:1px;white-space:nowrap}
.propbody{flex:1;min-height:0;display:flex;padding-left:2px;position:relative}
.props{width:340px;border-collapse:collapse;table-layout:fixed;margin-top:4px;flex:none;border-left:1px solid #aaa;align-self:flex-start;font-family:"Liberation Mono","Noto Sans CJK SC",monospace}
.c1{width:21px}.c2{width:191px}.c3{width:128px}
.props th{height:23px;background:linear-gradient(#fff,#e8e8e8);border-right:1px solid #c0c0c0;border-top:1px solid #aaa;font-weight:normal;font-family:"Noto Sans CJK SC",sans-serif;padding:0}
.props th.val{background:linear-gradient(#fbdc9c,#f2c060);color:#800080}
.props td{height:19px;padding:4px 0 0;vertical-align:top;border-bottom:1px solid #bcbcbc;border-right:1px solid #bcbcbc;white-space:nowrap;overflow:hidden;line-height:14px}
.props td:first-child{background:#f4f4f4;text-align:center;font-size:11px;letter-spacing:-.5px}
.props td:nth-child(2){padding-left:20px}
.props td:nth-child(3){padding-left:2px}
.props .blue{color:#00f}
.props .dim td:nth-child(n+2){color:#808080}
.cur td:nth-child(2){background:#0078d7;color:#fff}
.cur td:nth-child(3){background:#d6e8f8}
.props .cur td:first-child{background:#fdd690;color:#7a2020}
.m{font-family:"Liberation Mono",monospace;font-size:11px;letter-spacing:-.6px}
.rb{color:#111;font-family:"DejaVu Sans",sans-serif;font-size:12px;margin:0 1px}
.props .grp td:nth-child(2){padding-left:3px}
.plus{display:inline-block;width:12px;height:12px;border:1px solid #aaa;font:13px/10px "Liberation Sans",sans-serif;color:#111;text-align:center;margin-right:5px;vertical-align:-2px}
.vs-prop{position:absolute;right:6px;top:0;width:15px;height:567px}
.vs-prop .thumb{top:6px;height:305px}

.status{height:20px;flex:none;display:flex;background:#f3f3f3;gap:2px;padding:0 0 0 1px;white-space:nowrap}
.status span{border:1px solid #dcdcdc;background:#f8f8f8;padding-left:1px;line-height:17px}
.s0{width:147px}.s1{width:77px}.s2{width:97px}.s3{width:48px}.s4{flex:1}.s5{width:70px}
.status .s4{padding-left:3px}

.taskbar{height:40px;flex:none;background:#0c0c0c;display:flex;align-items:stretch;color:#fff}
.start{width:48px;background:#000;display:flex;align-items:center;justify-content:center}
.start svg{width:20px;height:20px}
.tsearch{width:346px;background:#333;display:flex;align-items:center;padding-left:9px;color:#8a8a8a;font-size:14px;position:relative}
.cortana{width:20px;height:20px;border-radius:50%;border:3px solid #ddd;margin-right:7px;flex:none}
.mic{width:12px;height:18px;position:absolute;right:23px;top:11px}
.apps{display:flex}
.app-i{width:49px;display:flex;align-items:center;justify-content:center;position:relative}
.app-i.e3{margin-left:4px}
.app-i svg{width:24px;height:24px}
.app-i.act{background:#2b2b2b}
.app-i.act::after,.app-i.run::after{content:"";position:absolute;left:0;right:8px;bottom:0;height:2px;background:#6fb0e8}
.app-i.act::after{right:0}
.tray{margin-left:auto;display:flex;align-items:center;position:relative;width:366px;flex:none}
.cpu{width:60px;margin-left:-13px;text-align:center;display:flex;flex-direction:column;line-height:18px;font-size:12px;color:#ddd}
.tray svg{flex:none}
.t1{width:14px;height:8px;margin-left:15px}
.t2{width:18px;height:16px;margin-left:9px}
.t3{width:16px;height:16px;margin-left:9px}
.t4{width:16px;height:16px;margin-left:5px}
.t5{width:22px;height:14px;margin-left:6px}
.zh{margin-left:8px;font-size:14px;font-weight:bold}
.sgt{font-family:"Liberation Sans",sans-serif;font-weight:bold;text-align:center;color:#fff;background:#e8501c;display:block}
.sg-small{width:15px;height:16px;line-height:16px;font-size:14px;border-radius:3px;margin-left:15px;transform:rotate(-6deg)}
.clock{width:66px;margin-left:9px;display:flex;flex-direction:column;text-align:center;line-height:18px;color:#ddd;white-space:nowrap}
.t6{width:16px;height:16px;margin-left:16px}

.netw{position:absolute;left:946px;top:6px;width:128px;height:48px}
.netw::before{content:"";position:absolute;left:24px;top:6px;right:0;height:40px;border-radius:20px;background:linear-gradient(#f8f8f8,#d8d8d8);box-shadow:0 2px 5px rgba(0,0,0,.35);border:1px solid #bbb}
.gauge{position:absolute;left:0;top:0;width:48px;height:48px;border-radius:50%;border:3px solid #e8e8e8;background:linear-gradient(#147a40 0,#1a9048 26%,#4fcc62 30%,#3fc05a 100%);color:#fff;font:17px/44px "Liberation Sans",sans-serif;text-align:center;box-shadow:0 1px 4px rgba(0,0,0,.5)}
.nrows{position:absolute;left:50px;top:10px;width:50px;display:grid;grid-template-columns:14px 1fr;line-height:15px;font-size:10px;color:#222;text-align:right}
.up{color:#e0502c;font-weight:bold;text-align:left;font-size:11px}
.down{color:#2c9c3c;font-weight:bold;text-align:left;font-size:11px}
.plusb{position:absolute;left:103px;top:16px;width:19px;height:19px;border-radius:50%;background:#2e7ad8;color:#fff;font:bold 16px/18px "Liberation Sans",sans-serif;text-align:center}
.dot{position:absolute;left:114px;top:16px;width:8px;height:8px;border-radius:50%;background:#e02020}

.dialog{position:absolute;left:660px;top:132px;width:683px;height:571px;border:1px solid #333;background:linear-gradient(#9ab4d2,#b8d2ec 32px,#a8d0ee);padding:0 6px 5px;display:flex;flex-direction:column}
.dtitle{height:30px;padding-top:10px;line-height:17px;flex:none}
.dbody{flex:1;min-height:0;background:#f0f0f0;display:flex;flex-direction:column}
.dtabs{height:21px;display:flex;flex:none;align-items:flex-end;padding-left:1px}
.dt{width:47px;height:19px;background:#f2f2f2;border:1px solid #ccc;border-bottom:0;padding-left:5px;line-height:18px}
.dt.act{width:51px;height:21px;background:#fff;padding:2px 0 0 6px}
.dpanel{flex:1;min-height:0;border:1px solid #dadada;border-bottom:0;margin-right:2px;padding:2px 2px 0 4px;display:flex;flex-direction:column;background:#f4f4f4}
.drow{height:26px;display:flex;align-items:center;gap:10px;background:linear-gradient(#fcfcfc,#f0f0f0);flex:none;white-space:nowrap;padding-left:1px}
.grip{width:2px;height:16px;margin-right:-1px;background:repeating-linear-gradient(#aaa 0 2px,transparent 2px 4px)}
.vsep{width:1px;height:18px;background:#bcbcbc;margin:0 -3px}
.gr{color:#8a8a8a}
.r2{height:29px;gap:2px;margin-bottom:2px;padding-left:1px}
.r2 .gr{margin-left:7px}
.rcombo{width:134px;height:23px;border:1px solid #777;display:flex;align-items:center;justify-content:space-between;padding:0 4px 0 2px;color:#777;font-family:"Liberation Sans",sans-serif;background:linear-gradient(#fbfbfb,#eee)}
.rcombo .caret{fill:#666}
.cv{width:660px;height:424px;border:2px solid #f00;background:#000;flex:none}
.cad{display:block;width:656px;height:420px}
.g{stroke:#4a4a4a;stroke-width:1;fill:none;stroke-dasharray:9 4 2 4}
.ax{stroke:#666;stroke-dasharray:18 4 3 4}
.gn{stroke:#0f0;stroke-width:1;fill:none}
.gn.thin{stroke:#2ad02a}
.wl{stroke:#fff;stroke-width:2;fill:none}
.ldr{stroke:#eee;stroke-width:1}
.rd{stroke:#f00;stroke-width:4.200;fill:none;stroke-linejoin:round}
.dy circle{fill:#990;stroke:#ff0;stroke-width:1.500}
.dm circle{fill:#228;stroke:#e0e;stroke-width:1.500}
.lbl{font:14px "Liberation Sans",sans-serif}
.w{fill:#fff}
.dimt{fill:#555;font-size:11px}
.dimt2{fill:#777;font-size:11px}
.cj{fill:#fff;font:16px "Noto Sans CJK SC",sans-serif}
.gt{fill:#0f0;font:13.300px "Liberation Mono",monospace}
.dstat{height:23px;margin-top:6px;display:flex;gap:2px;margin-left:-5px;flex:none;background:#fff;font-family:"Liberation Mono",monospace;font-size:11px;letter-spacing:-.6px;position:relative}
.dstat::after{content:"";position:absolute;right:2px;bottom:3px;width:9px;height:9px;background:radial-gradient(circle,#aaa 1px,transparent 1.200px) 0 0/3px 3px}
.dstat span{border:1px solid #e4e4e4;line-height:20px;padding-left:5px}
.xy{width:149px}.xyr{flex:1;background:#f8f8f8}

.ime{position:absolute;left:1060px;top:692px;width:170px;height:24px;background:#fbfdff;border:1px solid #c8d4e4;display:flex;align-items:center;gap:8.500px;padding-left:19px;color:#1f78c8}
.ime svg{width:15px;height:16px;flex:none}
.ying{font-weight:bold;font-size:14px;margin-right:-2px}
.ipunc{font:bold 12px "Liberation Sans",sans-serif;margin-right:6px}
.sg-big{position:absolute;left:-14px;top:-4px;width:26px;height:26px;border-radius:4px;font-size:23px;line-height:26px;transform:rotate(-6deg)}
```
